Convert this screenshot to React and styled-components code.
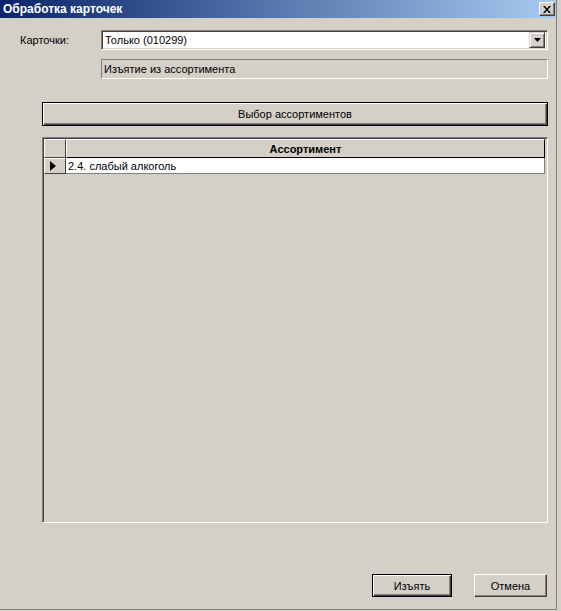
import React from "react";
import styled, { createGlobalStyle } from "styled-components";

const GlobalStyle = createGlobalStyle`
  html, body {
    margin: 0;
    padding: 0;
    background: #d4d0c8;
  }
  body {
    font-family: "Liberation Sans", Arial, sans-serif;
    font-size: 11px;
    color: #000;
  }
`;

const rows = [{ id: 1, name: "2.4. слабый алкоголь", current: true }];

const App = () => {
  return (
    <>
      <GlobalStyle />
      <Window>
        <TitleBar>
          <Title>Обработка карточек</Title>
          <CloseBtn>
            <svg width="8" height="7" viewBox="0 0 8 7">
              <path
                d="M0 0h2l2 2.5L6 0h2L5 3.5 8 7H6L4 4.5 2 7H0l3-3.5z"
                fill="#000"
              />
            </svg>
          </CloseBtn>
        </TitleBar>

        <Client>
          <FormRow>
            <Label>Карточки:</Label>
            <Combo>
              <ComboText>Только (010299)</ComboText>
              <ComboArrow>
                <svg width="7" height="4" viewBox="0 0 7 4">
                  <path d="M0 0h7L3.5 4z" fill="#000" />
                </svg>
              </ComboArrow>
            </Combo>
          </FormRow>

          <FormRow $top={9}>
            <Label />
            <ReadOnly>Изъятие из ассортимента</ReadOnly>
          </FormRow>

          <WideButton>Выбор ассортиментов</WideButton>

          <Grid>
            <GridRow>
              <Indicator />
              <HeaderCell>Ассортимент</HeaderCell>
            </GridRow>
            {rows.map((r) => (
              <GridRow key={r.id}>
                <Indicator>
                  {r.current && (
                    <svg width="6" height="10" viewBox="0 0 6 10">
                      <path d="M0 0l6 5-6 5z" fill="#000" />
                    </svg>
                  )}
                </Indicator>
                <Cell>{r.name}</Cell>
              </GridRow>
            ))}
          </Grid>

          <Footer>
            <DlgButton $default $width={80}>
              Изъять
            </DlgButton>
            <DlgButton $width={73}>Отмена</DlgButton>
          </Footer>
        </Client>
      </Window>
    </>
  );
};

const Window = styled.div`
  width: 556px;
  height: 609px;
  border-right: 1px solid #808080;
  border-bottom: 1px solid #808080;
  background: #d4d0c8;
  display: flex;
  flex-direction: column;
`;

const TitleBar = styled.div`
  height: 18px;
  display: flex;
  align-items: center;
  justify-content: space-between;
  padding: 0 1px 0 3px;
  background: linear-gradient(to right, #0a246a, #a6caf0);
`;

const Title = styled.span`
  color: #fff;
  font-weight: bold;
  font-size: 12px;
`;

const CloseBtn = styled.div`
  width: 16px;
  height: 14px;
  box-sizing: border-box;
  background: #d4d0c8;
  border-top: 1px solid #fff;
  border-left: 1px solid #fff;
  border-right: 1px solid #404040;
  border-bottom: 1px solid #404040;
  box-shadow: inset -1px -1px #808080;
  display: flex;
  align-items: center;
  justify-content: center;
`;

const Client = styled.div`
  flex: 1;
  display: flex;
  flex-direction: column;
  padding-top: 12px;
`;

const FormRow = styled.div`
  display: flex;
  align-items: center;
  margin-top: ${(p) => p.$top || 0}px;
  padding-left: 20px;
`;

const Label = styled.div`
  width: 81px;
  flex-shrink: 0;
`;

const Combo = styled.div`
  width: 447px;
  height: 20px;
  box-sizing: border-box;
  background: #fff;
  border-top: 1px solid #808080;
  border-left: 1px solid #808080;
  border-right: 1px solid #fff;
  border-bottom: 1px solid #fff;
  box-shadow: inset 1px 1px #404040, inset -1px -1px #d4d0c8;
  display: flex;
  align-items: center;
  padding: 2px 2px 2px 3px;
`;

const ComboText = styled.span`
  flex: 1;
`;

const ComboArrow = styled.div`
  width: 16px;
  height: 16px;
  box-sizing: border-box;
  background: #d4d0c8;
  border-top: 1px solid #d4d0c8;
  border-left: 1px solid #d4d0c8;
  border-right: 1px solid #404040;
  border-bottom: 1px solid #404040;
  box-shadow: inset 1px 1px #fff, inset -1px -1px #808080;
  display: flex;
  align-items: center;
  justify-content: center;
`;

const ReadOnly = styled.div`
  width: 447px;
  height: 20px;
  box-sizing: border-box;
  border-top: 1px solid #808080;
  border-left: 1px solid #808080;
  border-right: 1px solid #fff;
  border-bottom: 1px solid #fff;
  padding-left: 2px;
  display: flex;
  align-items: center;
`;

const WideButton = styled.div`
  margin: 23px 0 0 42px;
  width: 506px;
  height: 24px;
  box-sizing: border-box;
  border: 1px solid #000;
  box-shadow: inset 1px 1px #fff, inset -1px -1px #404040,
    inset -2px -2px #808080;
  display: flex;
  align-items: center;
  justify-content: center;
`;

const Grid = styled.div`
  margin: 11px 0 0 42px;
  width: 506px;
  height: 386px;
  box-sizing: border-box;
  border-top: 1px solid #808080;
  border-left: 1px solid #808080;
  border-right: 1px solid #fff;
  border-bottom: 1px solid #fff;
  box-shadow: inset 1px 1px #404040, inset -1px -1px #d4d0c8;
  padding: 1px 2px 2px 1px;
`;

const GridRow = styled.div`
  display: flex;
  height: 16px;
  &:first-child {
    height: 19px;
  }
`;

const Indicator = styled.div`
  width: 22px;
  box-sizing: border-box;
  background: #d4d0c8;
  border-top: 1px solid #fff;
  border-left: 1px solid #fff;
  border-right: 1px solid #404040;
  border-bottom: 1px solid #404040;
  display: flex;
  align-items: center;
  justify-content: center;
  padding-right: 4px;
`;

const HeaderCell = styled.div`
  flex: 1;
  box-sizing: border-box;
  background: #d4d0c8;
  border-top: 1px solid #fff;
  border-left: 1px solid #fff;
  border-right: 1px solid #000;
  border-bottom: 1px solid #000;
  font-weight: bold;
  display: flex;
  align-items: center;
  justify-content: center;
`;

const Cell = styled.div`
  flex: 1;
  box-sizing: border-box;
  background: #fff;
  border-right: 1px solid #808080;
  border-bottom: 1px solid #808080;
  padding-left: 2px;
  display: flex;
  align-items: center;
`;

const Footer = styled.div`
  display: flex;
  justify-content: flex-end;
  gap: 22px;
  margin-top: 51px;
  padding-right: 9px;
`;

const DlgButton = styled.div`
  width: ${(p) => p.$width}px;
  height: 23px;
  box-sizing: border-box;
  display: flex;
  align-items: center;
  justify-content: center;
  ${(p) =>
    p.$default
      ? `
    border: 1px solid #000;
    box-shadow: inset 1px 1px #fff, inset -1px -1px #404040, inset -2px -2px #808080;
  `
      : `
    border-top: 1px solid #fff;
    border-left: 1px solid #fff;
    border-right: 1px solid #404040;
    border-bottom: 1px solid #404040;
    box-shadow: inset -1px -1px #808080;
  `}
`;

export default App;
